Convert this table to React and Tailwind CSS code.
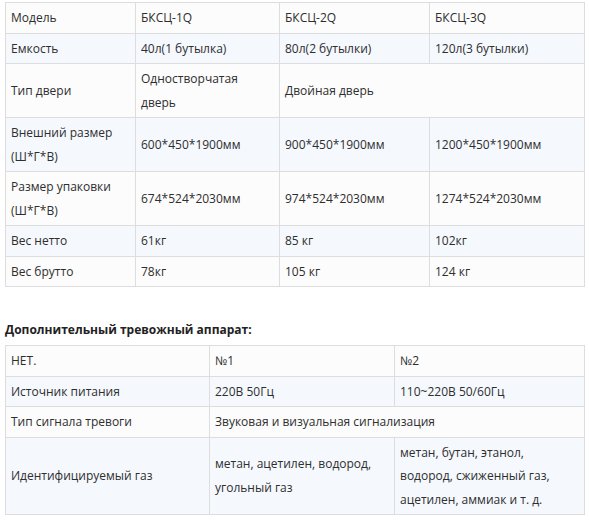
const SPECS = [
  ["Модель", "БКСЦ-1Q", "БКСЦ-2Q", "БКСЦ-3Q"],
  ["Емкость", "40л(1 бутылка)", "80л(2 бутылки)", "120л(3 бутылки)"],
  ["Тип двери", "Одностворчатая дверь", "Двойная дверь"],
  ["Внешний размер (Ш*Г*В)", "600*450*1900мм", "900*450*1900мм", "1200*450*1900мм"],
  ["Размер упаковки (Ш*Г*В)", "674*524*2030мм", "974*524*2030мм", "1274*524*2030мм"],
  ["Вес нетто", "61кг", "85 кг", "102кг"],
  ["Вес брутто", "78кг", "105 кг", "124 кг"],
];

const ALARM = [
  ["НЕТ.", "№1", "№2"],
  ["Источник питания", "220В 50Гц", "110~220В 50/60Гц"],
  ["Тип сигнала тревоги", "Звуковая и визуальная сигнализация"],
  ["Идентифицируемый газ", "метан, ацетилен, водород, угольный газ", "метан, бутан, этанол, водород, сжиженный газ, ацетилен, аммиак и т. д."],
];

function Table({ rows, widths }) {
  const cols = widths.length;
  return (
    <table className="border-collapse table-fixed w-[579px]">
      <colgroup>
        {widths.map((w, i) => <col key={i} style={{ width: w }} />)}
      </colgroup>
      <tbody>
        {rows.map((row, r) => (
          <tr key={r} className={r % 2 ? "bg-[#f5f9fe]" : "bg-[#fcfcfc]"}>
            {row.map((cell, c) => {
              const span = c === row.length - 1 ? cols - row.length + 1 : 1;
              return (
                <td key={c} colSpan={span} className="border border-[#dddddd] px-[5px] py-[3px] align-middle leading-[23.5px]">
                  {cell}
                </td>
              );
            })}
          </tr>
        ))}
      </tbody>
    </table>
  );
}

export default function App() {
  return (
    <div className="bg-white w-[589px] h-[520px] pl-[5px] pt-[2px] text-[12px] text-[#2e2e2e]" style={{ fontFamily: '"Open Sans", "Noto Sans", sans-serif' }}>
      <Table rows={SPECS} widths={[130, 144, 150, 155]} />
      <h3 className="font-bold text-[12px] text-[#222222] mt-[35px] mb-[7px] leading-[16px]">Дополнительный тревожный аппарат:</h3>
      <Table rows={ALARM} widths={[204, 185, 190]} />
    </div>
  );
}
